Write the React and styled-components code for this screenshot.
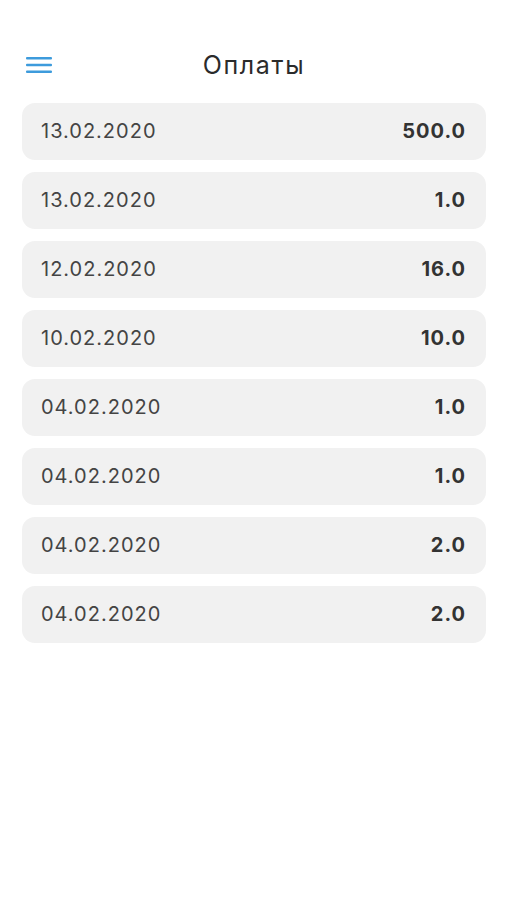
import React from "react";
import styled, { createGlobalStyle } from "styled-components";

const GlobalStyle = createGlobalStyle`
  body {
    margin: 0;
    background: #ffffff;
    font-family: "Inter", "Noto Sans", sans-serif;
  }
`;

const payments = [
  { date: "13.02.2020", amount: "500.0" },
  { date: "13.02.2020", amount: "1.0" },
  { date: "12.02.2020", amount: "16.0" },
  { date: "10.02.2020", amount: "10.0" },
  { date: "04.02.2020", amount: "1.0" },
  { date: "04.02.2020", amount: "1.0" },
  { date: "04.02.2020", amount: "2.0" },
  { date: "04.02.2020", amount: "2.0" },
];

const App = () => {
  return (
    <Page>
      <GlobalStyle />
      <Header>
        <MenuButton aria-label="menu">
          <svg width="26" height="18" viewBox="0 0 26 18">
            <rect x="0" y="1" width="26" height="2.4" rx="1" fill="#3d9bdc" />
            <rect x="0" y="7.8" width="26" height="2.4" rx="1" fill="#3d9bdc" />
            <rect x="0" y="14.6" width="26" height="2.4" rx="1" fill="#3d9bdc" />
          </svg>
        </MenuButton>
        <Title>Оплаты</Title>
      </Header>
      <List>
        {payments.map((p, i) => (
          <Row key={i}>
            <DateText>{p.date}</DateText>
            <Amount>{p.amount}</Amount>
          </Row>
        ))}
      </List>
    </Page>
  );
};

const Page = styled.div`
  padding: 0 21px 0 22px;
`;

const Header = styled.div`
  position: relative;
  height: 103px;
  display: flex;
  align-items: center;
  justify-content: center;
  padding-top: 28px;
  box-sizing: border-box;
`;

const MenuButton = styled.button`
  position: absolute;
  left: 4px;
  top: 56px;
  border: none;
  background: transparent;
  padding: 0;
  display: flex;
`;

const Title = styled.h1`
  margin: 0;
  margin-top: -2px;
  font-size: 25px;
  font-weight: 400;
  color: #2b2b2b;
  letter-spacing: 1.6px;
`;

const List = styled.div`
  display: flex;
  flex-direction: column;
  gap: 12px;
`;

const Row = styled.div`
  height: 57px;
  border-radius: 13px;
  background: #f1f1f1;
  display: flex;
  align-items: center;
  justify-content: space-between;
  padding: 0 20px 0 19px;
`;

const DateText = styled.span`
  font-size: 20px;
  color: #444444;
  letter-spacing: 1px;
  margin-top: -1px;
`;

const Amount = styled.span`
  font-size: 20px;
  font-weight: 700;
  color: #333333;
  letter-spacing: 1px;
  margin-top: -1px;
`;

export default App;
